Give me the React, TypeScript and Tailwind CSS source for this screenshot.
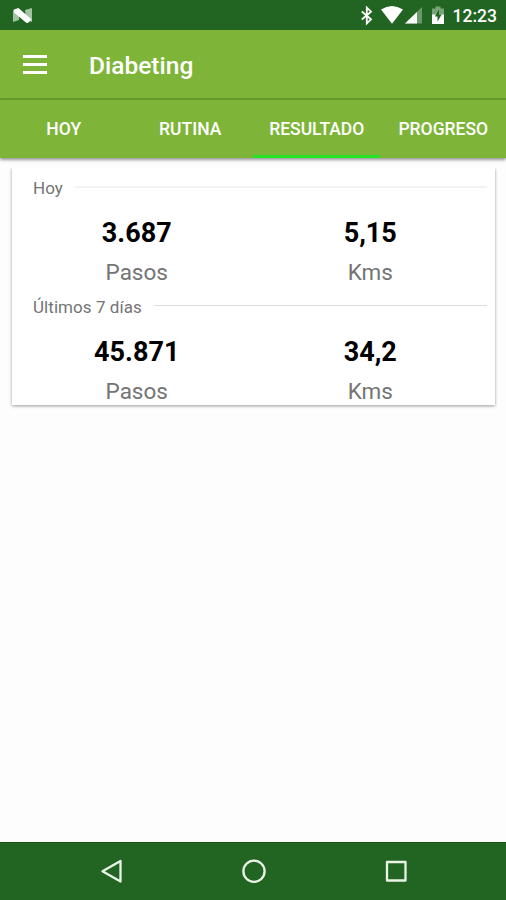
import React from "react";

const TABS = ["HOY", "RUTINA", "RESULTADO", "PROGRESO"];

function StatusBar() {
  return (
    <div className="flex h-[30px] shrink-0 items-center bg-[#226522] text-white">
      <svg className="ml-3 mt-0.5 h-[18px] w-[22px]" viewBox="0 0 22 18">
        <path d="M1 3L7 5V13L1 15Z" fill="#a3c3a3" />
        <path d="M13 3L20 1V15L14 13Z" fill="#a3c3a3" />
        <path d="M2 2.5L6.5 1L19.5 12.5L16 16H14.5L2 5.5Z" fill="#fff" />
      </svg>
      <div className="flex-1" />
      <svg className="h-[30px] w-[96px] shrink-0" viewBox="356 0 96 30">
        <path d="M361.8 11.5L371 19.3L366.8 23.3V7.7L371 11.7L361.8 19.5" fill="none" stroke="#fff" strokeWidth="1.8" />
        <path d="M381 9.5Q392 2.5 403 9.5L392 23.7Z" fill="#fff" />
        <path d="M422 7V23.5H405Z" fill="#6c996b" />
        <path d="M417 12V23.5H405Z" fill="#fff" />
        <path d="M435.5 6.5H440.5V8.5H444V15H432V8.5H435.5Z" fill="#78a477" />
        <path d="M432 14.5H444V24H432Z" fill="#fff" />
        <path d="M439 9.5L434.8 16.5H437.5V21.5L441.7 14.5H439Z" fill="#226522" />
      </svg>
      <span className="ml-[1px] mr-[9px] mt-[3px] text-[17.5px] font-medium leading-none">12:23</span>
    </div>
  );
}

function Section({ label, steps, kms, line }: { label: string; steps: string; kms: string; line: string }) {
  return (
    <section>
      <div className="flex h-5 items-center pl-[13px] text-[17px] tracking-[0.06px] text-[#747474]">
        <h2 className="mt-px shrink-0">{label}</h2>
        <div className={`mb-[3px] ml-3 flex-1 ${line}`} />
      </div>
      <div className="grid grid-cols-2 pt-[15px] text-center">
        {[[steps, "Pasos"], [kms, "Kms"]].map(([value, unit]) => (
          <div key={unit}>
            <div className="h-10 text-[27px] font-bold leading-[41px] text-black">{value}</div>
            <div className="mt-[6px] h-[27px] text-[22.5px] leading-[26px] text-[#747474]">{unit}</div>
          </div>
        ))}
      </div>
    </section>
  );
}

export default function App() {
  return (
    <div className="flex h-[900px] w-[506px] flex-col overflow-hidden bg-[#fdfdfd] font-['Roboto',sans-serif]">
      <StatusBar />
      <header className="flex h-[70px] shrink-0 items-center border-b-2 border-[#669a31] bg-[#7eb539] pl-[23px] text-white">
        <button className="flex w-6 flex-col gap-[5px]" aria-label="Menú">
          <span className="h-[3px] w-full bg-white" />
          <span className="h-[3px] w-full bg-white" />
          <span className="h-[3px] w-full bg-white" />
        </button>
        <h1 className="ml-[42px] mt-[5px] text-[24.5px] font-medium leading-none">Diabeting</h1>
      </header>
      <nav className="grid h-[58px] shrink-0 grid-cols-4 bg-[#7eb539] shadow-[0_2px_3px_rgba(0,0,0,0.4)]">
        {TABS.map((tab) => (
          <button
            key={tab}
            className={`border-b-[3px] pl-[1px] pt-[4px] text-[17.5px] font-medium text-white ${tab === "RESULTADO" ? "border-[#25e626]" : "border-transparent"}`}
          >
            {tab}
          </button>
        ))}
      </nav>
      <main className="flex-1 overflow-hidden pt-[10px]">
        <div className="h-[250px] overflow-hidden">
          <div className="ml-3 h-[237px] w-[483px] bg-white pl-2 pr-2 pt-[10px] shadow-[0_1px_3px_rgba(0,0,0,0.4)]">
            <div className="flex flex-col gap-[11px]">
              <Section label="Hoy" steps="3.687" kms="5,15" line="h-[2px] bg-[#f2f2f2]" />
              <Section label="Últimos 7 días" steps="45.871" kms="34,2" line="h-px bg-[#dedede]" />
            </div>
          </div>
        </div>
      </main>
      <footer className="h-[58px] shrink-0 border-t border-[#125712] bg-[#226522]">
        <svg className="h-[57px] w-[506px]" viewBox="0 843 506 57" fill="none" stroke="#eaf5e8" strokeWidth="2.3" strokeLinejoin="round">
          <path d="M120.5 861V881.5L102.5 871.2Z" />
          <circle cx="254" cy="871.2" r="10.6" />
          <rect x="387" y="862" width="18.5" height="18.5" />
        </svg>
      </footer>
    </div>
  );
}
